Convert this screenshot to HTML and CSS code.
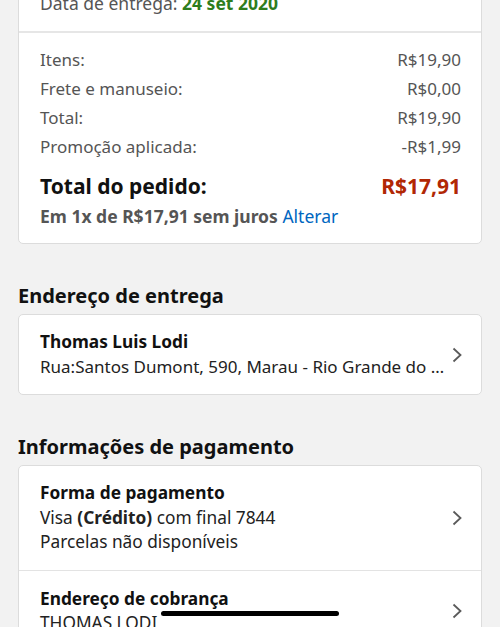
FILE: index.html
```html
<!DOCTYPE html>
<html lang="pt-BR">
<head>
    <meta charset="UTF-8">
    <meta name="viewport" content="width=device-width, initial-scale=1.0">
    <title>Resumo do pedido</title>
    <link rel="stylesheet" href="styles.css">
</head>
<body>
    <div class="page">
        <div class="card">
            <div class="delivery">
                Data de entrega: <span class="date">24 set 2020</span>
            </div>
            <div class="summary">
                <div class="row"><span>Itens:</span><span>R$19,90</span></div>
                <div class="row"><span>Frete e manuseio:</span><span>R$0,00</span></div>
                <div class="row"><span>Total:</span><span>R$19,90</span></div>
                <div class="row"><span>Promoção aplicada:</span><span>-R$1,99</span></div>
                <div class="row grand"><span>Total do pedido:</span><span class="price">R$17,91</span></div>
                <p class="installments">Em 1x de R$17,91 sem juros <a href="#">Alterar</a></p>
            </div>
        </div>

        <h2>Endereço de entrega</h2>
        <div class="card">
            <div class="item">
                <div class="item-text">
                    <div class="item-title">Thomas Luis Lodi</div>
                    <div class="ellipsis">Rua:Santos Dumont, 590, Marau - Rio Grande do Sul</div>
                </div>
                <svg class="chevron" width="12" height="18" viewBox="0 0 12 18"><path d="M2.5 2.5l7 6.5-7 6.5" fill="none" stroke="#5a5a5a" stroke-width="1.8"/></svg>
            </div>
        </div>

        <h2>Informações de pagamento</h2>
        <div class="card">
            <div class="item">
                <div class="item-text">
                    <div class="item-title">Forma de pagamento</div>
                    <div>Visa <b>(Crédito)</b> com final 7844</div>
                    <div>Parcelas não disponíveis</div>
                </div>
                <svg class="chevron" width="12" height="18" viewBox="0 0 12 18"><path d="M2.5 2.5l7 6.5-7 6.5" fill="none" stroke="#5a5a5a" stroke-width="1.8"/></svg>
            </div>
            <div class="item divided">
                <div class="item-text">
                    <div class="item-title">Endereço de cobrança</div>
                    <div>THOMAS LODI</div>
                </div>
                <svg class="chevron" width="12" height="18" viewBox="0 0 12 18"><path d="M2.5 2.5l7 6.5-7 6.5" fill="none" stroke="#5a5a5a" stroke-width="1.8"/></svg>
            </div>
        </div>
    </div>
    <div class="scribble"></div>
</body>
</html>
```

FILE: styles.css
```css
body {
    font-family: 'Noto Sans', 'Liberation Sans', sans-serif;
    margin: 0;
    background-color: #f2f2f2;
    color: #111;
    overflow: hidden;
}
.page {
    padding: 0 18px;
    margin-top: -17px;
}
.card {
    background-color: #fff;
    border: 1px solid #dcdcdc;
    border-radius: 5px;
}
.delivery {
    padding: 7px 21px 16px;
    font-size: 17.5px;
    color: #555;
    border-bottom: 2px solid #e6e6e6;
}
.date {
    color: #2e7d1c;
    font-weight: bold;
}
.summary {
    padding: 12px 20px 12px 21px;
}
.row {
    display: flex;
    justify-content: space-between;
    font-size: 17px;
    line-height: 29px;
    color: #555;
}
.row.grand {
    font-size: 21px;
    font-weight: bold;
    color: #111;
    line-height: 30px;
    margin-top: 10px;
}
.price {
    color: #b12704;
}
.installments {
    margin: 0;
    font-size: 17.5px;
    font-weight: bold;
    line-height: 30px;
    color: #555;
}
.installments a {
    color: #0066c0;
    font-weight: normal;
    text-decoration: none;
}
h2 {
    font-size: 20px;
    margin: 38px 0 5px;
    color: #111;
}
.item {
    display: flex;
    align-items: center;
    padding: 15px 18px 15px 21px;
    font-size: 17.3px;
    line-height: 24.5px;
    color: #222;
}
.item.divided {
    border-top: 1px solid #e3e3e3;
    padding-top: 16px;
}
.item-text {
    flex: 1;
    min-width: 0;
}
.item-title {
    font-weight: bold;
    color: #111;
}
.ellipsis {
    font-size: 17px;
    white-space: nowrap;
    overflow: hidden;
    text-overflow: ellipsis;
}
.chevron {
    flex-shrink: 0;
    margin-left: 6px;
}
.scribble {
    position: absolute;
    left: 161px;
    top: 611px;
    width: 178px;
    height: 5px;
    border-radius: 3px;
    background-color: #000;
}
```
